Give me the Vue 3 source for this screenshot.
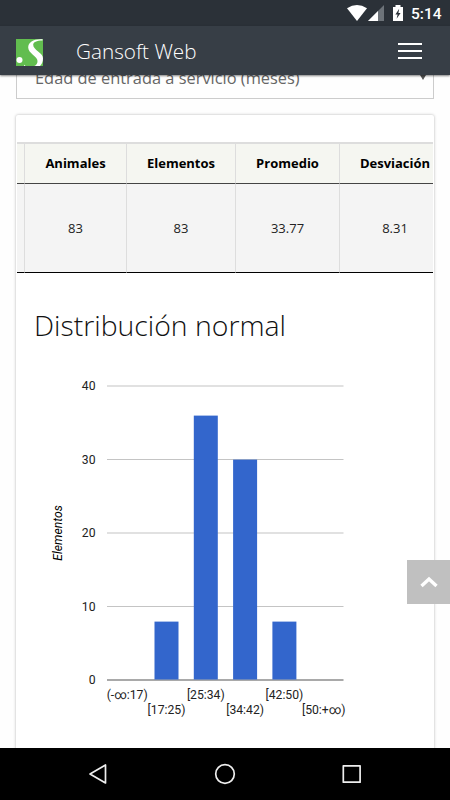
<template>
  <div class="screen">
    <div class="status-bar">
      <svg class="status-icons" width="60" height="20" viewBox="0 0 60 20">
        <path d="M0 3.2 Q10 -3 20 3.2 L10 16 Z" fill="#fff" />
        <path d="M37 0 V16 H21 Z" fill="#6d7379" />
        <path d="M31 6 V16 H21 Z" fill="#fff" />
        <path d="M46 2 h2.5 v-2 h5 v2 H56 v14 H46 Z" fill="#fff" />
        <path d="M52.2 3.8 L48.4 9.6 H50.6 L49.6 13.8 L53.6 8 H51.4 Z" fill="#2b3138" />
      </svg>
      <span class="clock">5:14</span>
    </div>

    <header class="top-bar">
      <svg class="logo" width="27" height="27" viewBox="0 0 27 27">
        <rect width="27" height="27" fill="#62bd4f" />
        <path
          d="M26.5 .3 C18 -.3 12.2 3 12.2 8.4 C12.2 14.4 21.5 17 21.5 22 C21.5 24.5 20.5 26 18.3 27 H24 C26.2 24.8 27 22.5 27 19.3 C27 13.8 17.2 11.2 17.2 5.8 C17.2 3 20.5 1.4 26.5 1.4 Z"
          fill="#fff"
        />
        <circle cx="3.5" cy="21" r="3" fill="#fff" />
        <path d="M8 25.8 L9.6 27 H8 Z" fill="#fff" />
      </svg>
      <h1>Gansoft Web</h1>
      <button class="menu-btn" aria-label="Menú">
        <span></span>
        <span></span>
        <span></span>
      </button>
    </header>

    <main class="content">
      <div class="select-box">
        <span>Edad de entrada a servicio (meses)</span>
        <i class="caret"></i>
      </div>

      <section class="card">
        <div class="table-wrap">
          <div class="cell head"></div>
          <div v-for="c in columns" :key="c.name" class="cell head">{{ c.name }}</div>
          <div class="cell"></div>
          <div v-for="c in columns" :key="c.name" class="cell">{{ c.value }}</div>
        </div>

        <h2>Distribución normal</h2>

        <svg class="chart" width="330" height="370" viewBox="35 360 330 370">
          <g v-for="t in ticks" :key="t">
            <rect x="107" :y="yPos(t)" width="236.5" height="1" :fill="t ? '#c4c4c4' : '#555'" />
            <text class="label" x="95.5" :y="yPos(t) + 4.5" text-anchor="end">{{ t }}</text>
          </g>
          <g v-for="(b, i) in bars" :key="b.label">
            <rect
              v-if="b.count"
              :x="xPos(i) - 12"
              :y="yPos(b.count) + 0.6"
              width="24"
              :height="yPos(0) - yPos(b.count) - 0.6"
              fill="#3366cc"
            />
            <text class="label" :x="xPos(i)" :y="i % 2 ? 713.5 : 698.5" text-anchor="middle">{{ b.label }}</text>
          </g>
          <text class="axis-title" transform="translate(62 533) rotate(-90)" text-anchor="middle">Elementos</text>
        </svg>
      </section>
    </main>

    <button class="to-top" aria-label="Subir">
      <svg width="18" height="12" viewBox="0 0 18 12">
        <path d="M1.5 10 L9 3 L16.5 10" fill="none" stroke="#fff" stroke-width="3.4" />
      </svg>
    </button>

    <nav class="nav-bar">
      <svg width="20" height="22" viewBox="0 0 20 22">
        <path d="M17.5 2 V20 L2 11 Z" />
      </svg>
      <svg width="22" height="22" viewBox="0 0 22 22">
        <circle cx="11" cy="11" r="9.3" />
      </svg>
      <svg width="20" height="22" viewBox="0 0 20 22">
        <rect x="2.3" y="2.8" width="16.8" height="16.4" />
      </svg>
    </nav>
  </div>
</template>

<script setup>
const columns = [
  { name: 'Animales', value: '83' },
  { name: 'Elementos', value: '83' },
  { name: 'Promedio', value: '33.77' },
  { name: 'Desviación', value: '8.31' }
]

const bars = [
  { label: '(-∞:17)', count: 0 },
  { label: '[17:25)', count: 8 },
  { label: '[25:34)', count: 36 },
  { label: '[34:42)', count: 30 },
  { label: '[42:50)', count: 8 },
  { label: '[50:+∞)', count: 0 }
]

const ticks = [40, 30, 20, 10, 0]

// chart scales
const yPos = (v) => Math.round((679.7 - v * 7.35) * 2) / 2
const xPos = (i) => 127.2 + i * 39.3
</script>

<style>
body {
  margin: 0;
}
</style>

<style scoped>
.screen {
  position: relative;
  display: flex;
  flex-direction: column;
  width: 450px;
  height: 800px;
  overflow: hidden;
  background: #fefefe;
  font-family: "Open Sans", sans-serif;
}
.status-bar {
  flex: none;
  display: flex;
  justify-content: flex-end;
  height: 26px;
  padding-right: 9px;
  background: #2b3138;
}
.status-icons {
  margin: 5px 4px 0 0;
}
.clock {
  width: 30px;
  color: #fff;
  font: 500 15.5px/28px Roboto, sans-serif;
  white-space: nowrap;
}
.top-bar {
  z-index: 1;
  flex: none;
  display: flex;
  align-items: center;
  box-sizing: border-box;
  height: 49px;
  padding: 0 28px 0 16px;
  background: #373e46;
  box-shadow: 0 1px 2px rgba(0, 0, 0, 0.5);
}
.logo {
  margin-top: 3px;
}
h1 {
  flex: 1;
  margin: 0 0 0 33px;
  color: #fff;
  font-size: 20.7px;
  font-weight: 300;
  line-height: 48px;
}
.menu-btn {
  display: flex;
  flex-direction: column;
  gap: 5px;
  padding: 1px 0 0;
  border: none;
  background: none;
}
.menu-btn span {
  width: 24px;
  height: 2px;
  background: #fff;
}
.content {
  flex: 1;
  min-height: 0;
  overflow: hidden;
  padding: 0 16px;
}
.select-box {
  display: flex;
  justify-content: space-between;
  box-sizing: border-box;
  height: 42px;
  margin-top: -18px;
  padding: 0 7px 0 18px;
  border: 1px solid #ccc;
  color: #666;
  font-size: 16.4px;
  line-height: 39px;
}
.caret {
  margin-top: 17px;
  height: 0;
  border: 3px solid transparent;
  border-top: 5px solid #555;
}
.card {
  box-sizing: border-box;
  height: 680px;
  margin-top: 16px;
  padding: 27px 1px 0;
  border-radius: 2px;
  background: #fff;
  box-shadow: 0 0 3px rgba(0, 0, 0, 0.3);
}
.table-wrap {
  display: grid;
  grid-template-columns: 8px 102px 109px 104px 111px;
  grid-template-rows: 40px 89px;
  overflow: hidden;
  border-top: 2px solid #ddd;
}
.cell {
  display: flex;
  align-items: center;
  justify-content: center;
  box-sizing: border-box;
  padding-bottom: 1px;
  border-right: 1px solid #ddd;
  border-bottom: 1px solid #000;
  background: #f4f4f4;
  color: #222;
  font-size: 13px;
}
.head {
  padding-bottom: 2px;
  border-bottom-color: #444;
  background: #f5f6f1;
  color: #000;
  font-weight: 700;
}
h2 {
  margin: 29px 0 0 17px;
  color: #111;
  font-size: 28.4px;
  font-weight: 300;
  line-height: 46px;
}
.chart {
  display: block;
  margin: 12px 0 0 18px;
}
.label,
.axis-title {
  fill: #222;
  font-family: Roboto, sans-serif;
  font-size: 12.2px;
}
.axis-title {
  fill: #000;
  font-style: italic;
}
.to-top {
  position: absolute;
  right: 0;
  top: 560px;
  display: flex;
  align-items: center;
  justify-content: center;
  width: 43px;
  height: 44px;
  padding: 0;
  border: none;
  background: #c0c0c0;
}
.nav-bar {
  z-index: 1;
  flex: none;
  display: flex;
  align-items: center;
  justify-content: space-between;
  box-sizing: border-box;
  height: 52px;
  padding: 0 89px 0 88px;
  background: #000;
}
.nav-bar svg {
  fill: none;
  stroke: #eee;
  stroke-width: 1.7;
  stroke-linejoin: round;
}
</style>
